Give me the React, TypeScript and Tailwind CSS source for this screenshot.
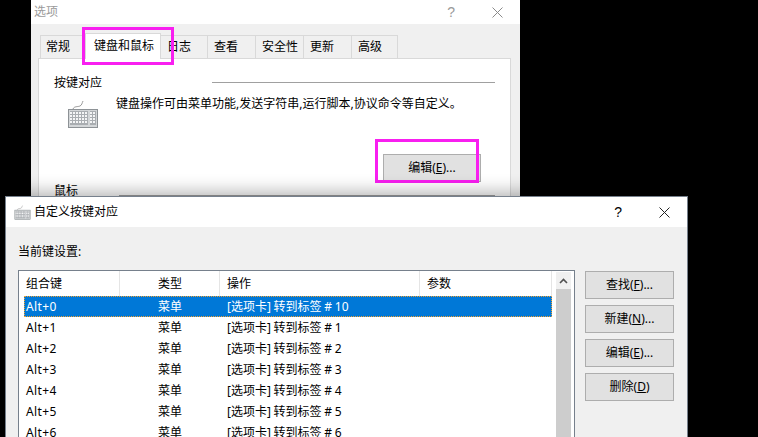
const font = "font-['Noto_Sans','Noto_Sans_CJK_SC',sans-serif]";

const tabs = [
  { label: "常规", className: "ml-[9px] h-[23px] w-[45px] bg-[#f0f0f0] pl-[5px]" },
  { label: "键盘和鼠标", className: "relative z-10 -mb-px h-[26px] w-[76px] bg-white pb-[2px] pl-[8px]" },
  { label: "日志", className: "-ml-px h-[23px] w-[48px] bg-[#f0f0f0] pl-[6px]" },
  { label: "查看", className: "-ml-px h-[23px] w-[49px] bg-[#f0f0f0] pl-[6px]" },
  { label: "安全性", className: "-ml-px h-[23px] w-[49px] bg-[#f0f0f0] pl-[6px]" },
  { label: "更新", className: "-ml-px h-[23px] w-[49px] bg-[#f0f0f0] pl-[6px]" },
  { label: "高级", className: "-ml-px h-[23px] w-[47px] bg-[#f0f0f0] pl-[6px]" },
];

const rows = [
  ["Alt+0", "菜单", "[选项卡] 转到标签 # 10"],
  ["Alt+1", "菜单", "[选项卡] 转到标签 # 1"],
  ["Alt+2", "菜单", "[选项卡] 转到标签 # 2"],
  ["Alt+3", "菜单", "[选项卡] 转到标签 # 3"],
  ["Alt+4", "菜单", "[选项卡] 转到标签 # 4"],
  ["Alt+5", "菜单", "[选项卡] 转到标签 # 5"],
  ["Alt+6", "菜单", "[选项卡] 转到标签 # 6"],
];

function KeyboardIcon({ className }: { className: string }) {
  return (
    <svg viewBox="0 0 32 28" className={className}>
      <path d="M6 9C7 6 11 7 13 6C15 5 15 3 16 1" fill="none" stroke="#9a9a9a" strokeWidth="1" />
      <rect x="1.5" y="9.5" width="29" height="18" fill="#d3d6d8" stroke="#8d9296" />
      <rect x="3" y="11" width="18" height="14" fill="#a9adb1" />
      <rect x="23" y="11" width="6" height="14" fill="#a9adb1" />
      {[12, 15, 18, 21].map((y) => (
        <g key={y}>
          <path d={`M3 ${y + 1}H21`} stroke="#f4f5f6" strokeWidth="2" strokeDasharray="2 1" />
          <path d={`M23 ${y + 1}H29`} stroke="#f4f5f6" strokeWidth="2" strokeDasharray="2 1" />
        </g>
      ))}
    </svg>
  );
}

function CloseIcon({ color }: { color: string }) {
  return (
    <svg viewBox="0 0 11 11" className="h-[11px] w-[11px]">
      <path d="M0.5 0.5L10.5 10.5M10.5 0.5L0.5 10.5" stroke={color} strokeWidth="1" fill="none" />
    </svg>
  );
}

function ActionButton({ name, hotkey, suffix }: { name: string; hotkey: string; suffix: string }) {
  return (
    <button className="flex h-[28px] w-[89px] items-center justify-center border border-[#adadad] bg-[#e1e1e1] text-[12px] text-black">
      {name}(<span className="underline">{hotkey}</span>){suffix}
    </button>
  );
}

function ListRow({ cells, selected }: { cells: string[]; selected?: boolean }) {
  return (
    <div
      className={`flex h-[21px] w-[528px] items-center text-[12px] ${
        selected ? "border border-dotted border-[#f0a030] bg-[#0078d7] text-white" : "text-black"
      }`}
    >
      <div className={`tracking-[0.4px] ${selected ? "w-[133px] pl-[1px]" : "w-[134px] pl-[2px]"}`}>{cells[0]}</div>
      <div className="w-[69px]">{cells[1]}</div>
      <div className="[word-spacing:-0.4px]">{cells[2]}</div>
    </div>
  );
}

export default function App() {
  return (
    <div className={`relative h-[437px] w-[758px] overflow-hidden bg-black ${font}`}>
      {/* 选项 */}
      <div className="absolute top-0 left-[31px] h-[240px] w-[489px] bg-[#f0f0f0]">
        <div className="flex h-[24px] items-center bg-white pl-[3px] text-[12px] text-[#9a9a9a]">
          <span className="flex-1">选项</span>
          <span className="mr-[37px] font-['Liberation_Sans'] text-[14px] text-[#9a9a9a]">?</span>
          <span className="mr-[17px] flex">
            <CloseIcon color="#8a8a8a" />
          </span>
        </div>
        <div className="flex h-[34px] items-end">
          {tabs.map((tab) => (
            <div
              key={tab.label}
              className={`flex items-center border border-b-0 border-[#d9d9d9] text-[12px] text-black ${tab.className}`}
            >
              {tab.label}
            </div>
          ))}
        </div>
        <div className="ml-[7px] h-[170px] w-[473px] border border-[#d9d9d9] bg-white pt-[15px] pl-[15px] text-[12px] text-black">
          <div className="flex items-center">
            <span className="w-[158px]">按键对应</span>
            <div className="h-px w-[283px] -translate-y-px bg-[#a0a0a0]" />
          </div>
          <div className="flex pt-[4px]">
            <KeyboardIcon className="mt-[4px] ml-[13px] h-[28px] w-[32px]" />
            <span className="ml-[17px] leading-[16px]">键盘操作可由菜单功能,发送字符串,运行脚本,协议命令等自定义。</span>
          </div>
          <div className="flex pt-[26px] pl-[329px]">
            <button className="flex h-[28px] w-[98px] items-center justify-center border border-[#adadad] bg-[#e1e1e1] text-[12px]">
              编辑(<span className="underline">E</span>)...
            </button>
          </div>
          <div className="flex items-start">
            <span className="w-[65px]">鼠标</span>
            <div className="mt-[13px] h-px w-[376px] bg-[#a0a0a0]" />
          </div>
        </div>
      </div>

      {/* 标注框 */}
      <div className="absolute top-[27px] left-[82px] z-20 h-[38px] w-[92px] border-[3px] border-[#f81ff0]" />
      <div className="absolute top-[139px] left-[375px] z-20 h-[44px] w-[104px] border-[3px] border-[#f81ff0]" />

      {/* 自定义按键对应 */}
      <div className="absolute top-[196px] left-[5px] z-30 h-[260px] w-[683px] border border-[#76808c] bg-[#f0f0f0] shadow-[0_-4px_16px_rgba(0,0,0,0.3)]">
        <div className="flex h-[30px] items-center bg-white pl-[8px] text-[12px] text-black">
          <KeyboardIcon className="h-[15px] w-[17px]" />
          <span className="ml-[3px] flex-1">自定义按键对应</span>
          <span className="mr-[37px] font-['Liberation_Sans'] text-[14px]">?</span>
          <span className="mr-[17px] flex">
            <CloseIcon color="#222222" />
          </span>
        </div>
        <div className="flex pt-[15px] pl-[12px]">
          <div className="w-[557px]">
            <div className="h-[28px] pt-[2px] text-[12px] leading-[16px] text-black">当前键设置:</div>
            <div className="flex h-[200px] w-[557px] border border-[#76808c] bg-white">
              <div className="w-[533px] pl-[5px]">
                <div className="flex h-[25px] w-[528px] items-center text-[12px] text-black">
                  <div className="h-full w-[96px] border-r border-[#e5e5e5] pt-[4px] pl-[2px]">组合键</div>
                  <div className="h-full w-[100px] border-r border-[#e5e5e5] pt-[4px] pl-[38px]">类型</div>
                  <div className="h-full w-[200px] border-r border-[#e5e5e5] pt-[4px] pl-[7px]">操作</div>
                  <div className="h-full w-[132px] border-r border-[#e5e5e5] pt-[4px] pl-[7px]">参数</div>
                </div>
                <ListRow cells={rows[0]} selected />
                {rows.slice(1).map((row) => (
                  <ListRow key={row[0]} cells={row} />
                ))}
              </div>
              <div className="mt-px ml-[4px] flex h-full w-[15px] flex-col bg-[#cdcdcd]">
                <div className="flex h-[17px] items-center justify-center bg-[#f0f0f0]">
                  <svg viewBox="0 0 9 6" className="h-[6px] w-[9px]">
                    <path d="M1 5L4.5 1.5L8 5" fill="none" stroke="#505050" strokeWidth="1.6" />
                  </svg>
                </div>
              </div>
            </div>
          </div>
          <div className="ml-[10px] flex flex-col gap-[6px] pt-[29px]">
            <ActionButton name="查找" hotkey="F" suffix="..." />
            <ActionButton name="新建" hotkey="N" suffix="..." />
            <ActionButton name="编辑" hotkey="E" suffix="..." />
            <ActionButton name="删除" hotkey="D" suffix="" />
          </div>
        </div>
      </div>
    </div>
  );
}
